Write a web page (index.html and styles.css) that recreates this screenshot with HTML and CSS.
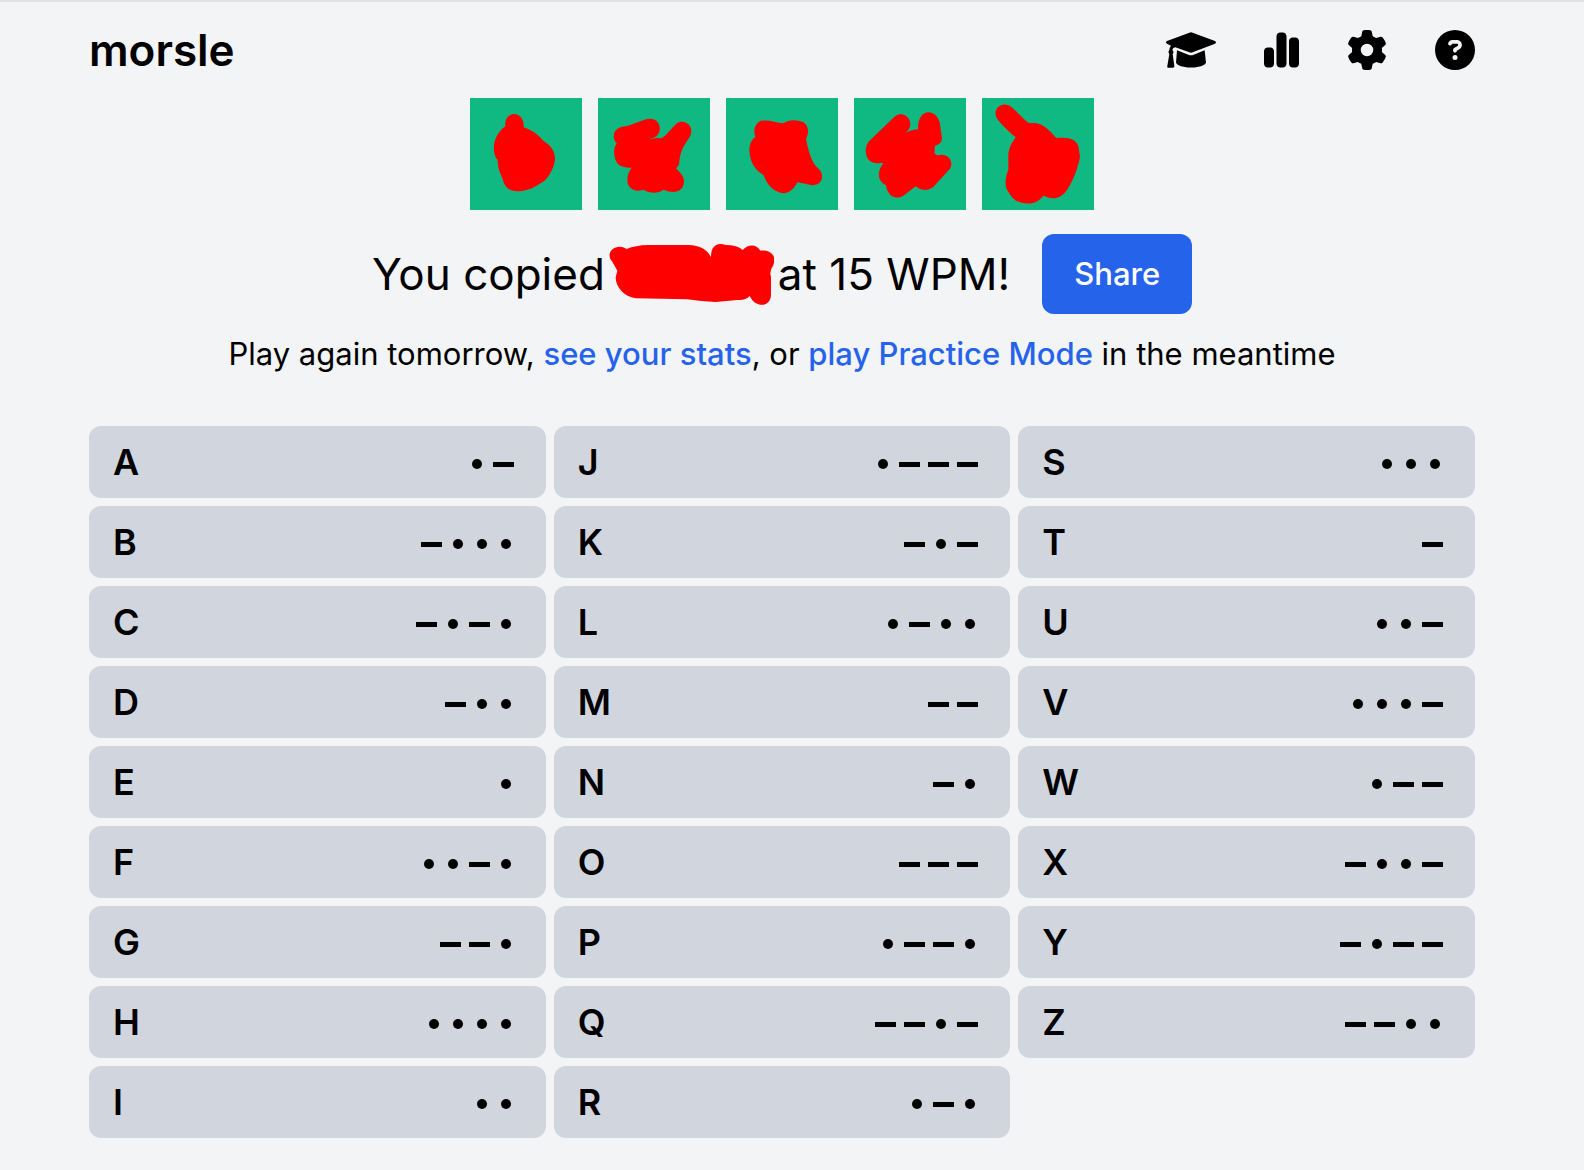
FILE: index.html
```html
<!DOCTYPE html>
<html lang="en">
<head>
    <meta charset="UTF-8">
    <meta name="viewport" content="width=device-width, initial-scale=1">
    <title>morsle</title>
    <link rel="stylesheet" href="styles.css">
</head>
<body>
    <div class="page">
        <header class="header">
            <h1>morsle</h1>
            <nav class="menu">
                <button type="button" aria-label="Practice Mode">
                    <svg class="icon" viewBox="48 60 150 120">
                        <path d="M118 68Q123 66 128 68L195 93Q201 97 195 101L128 127Q123 129 118 127L76 112Q68 113 67 120Q73 126 68 132L73 168Q74 173 69 173H55Q50 173 52 168L58 132Q53 126 58 120Q58 113 63 107L51 101Q45 97 51 93Z"/>
                        <path d="M81 121L115 134Q123 137 131 134L164 121L168 158Q163 167 145 170Q123 175 101 170Q83 167 78 158Z"/>
                    </svg>
                </button>
                <button type="button" aria-label="Stats">
                    <svg class="icon" viewBox="0 0 448 512"><path d="M160 80c0-26.500 21.500-48 48-48h32c26.500 0 48 21.500 48 48V432c0 26.500-21.500 48-48 48H208c-26.500 0-48-21.500-48-48V80zM0 272c0-26.500 21.500-48 48-48H80c26.500 0 48 21.500 48 48V432c0 26.500-21.500 48-48 48H48c-26.500 0-48-21.500-48-48V272zM368 96h32c26.500 0 48 21.500 48 48V432c0 26.500-21.500 48-48 48H368c-26.500 0-48-21.500-48-48V144c0-26.500 21.500-48 48-48z"/></svg>
                </button>
                <button type="button" aria-label="Settings">
                    <svg class="icon" viewBox="0 0 512 512"><path d="M495.900 166.600c3.200 8.700 .5 18.400-6.400 24.600l-43.300 39.400c1.100 8.300 1.700 16.800 1.700 25.400s-.6 17.100-1.700 25.400l43.300 39.400c6.900 6.200 9.600 15.900 6.400 24.600c-4.400 11.900-9.700 23.300-15.800 34.300l-4.700 8.100c-6.600 11-14 21.400-22.100 31.200c-5.900 7.200-15.700 9.600-24.500 6.800l-55.700-17.700c-13.400 10.300-28.200 18.900-44 25.400l-12.500 57.100c-2 9.100-9 16.300-18.200 17.800c-13.800 2.300-28 3.500-42.500 3.500s-28.700-1.200-42.500-3.500c-9.200-1.500-16.200-8.700-18.200-17.800l-12.500-57.100c-15.800-6.500-30.600-15.100-44-25.400L83.100 425.900c-8.800 2.800-18.600 .3-24.500-6.800c-8.100-9.800-15.500-20.200-22.100-31.200l-4.700-8.100c-6.100-11-11.400-22.400-15.800-34.300c-3.200-8.700-.5-18.400 6.400-24.600l43.300-39.400C64.600 273.100 64 264.600 64 256s.6-17.100 1.700-25.400L22.400 191.200c-6.900-6.200-9.600-15.900-6.400-24.600c4.400-11.900 9.700-23.300 15.800-34.300l4.700-8.100c6.600-11 14-21.400 22.100-31.200c5.900-7.200 15.700-9.600 24.500-6.800l55.700 17.700c13.400-10.300 28.200-18.900 44-25.400l12.500-57.100c2-9.100 9-16.300 18.200-17.800C227.300 1.200 241.500 0 256 0s28.700 1.200 42.500 3.500c9.200 1.500 16.200 8.700 18.200 17.800l12.500 57.100c15.800 6.500 30.600 15.100 44 25.400l55.700-17.700c8.800-2.800 18.600-.3 24.500 6.800c8.100 9.800 15.500 20.200 22.100 31.200l4.700 8.100c6.100 11 11.400 22.400 15.800 34.300zM256 336a80 80 0 1 0 0-160 80 80 0 1 0 0 160z"/></svg>
                </button>
                <button type="button" aria-label="Help">
                    <svg class="icon" viewBox="0 0 512 512"><path d="M256 512A256 256 0 1 0 256 0a256 256 0 1 0 0 512zM169.800 165.300c7.900-22.300 29.100-37.300 52.800-37.300h58.300c34.900 0 63.100 28.300 63.100 63.100c0 22.600-12.100 43.500-31.700 54.800L280 264.400c-.2 13-10.900 23.600-24 23.600c-13.300 0-24-10.700-24-24V250.500c0-8.600 4.600-16.500 12.100-20.800l44.300-25.400c4.700-2.700 7.600-7.700 7.600-13.100c0-8.400-6.800-15.100-15.100-15.100H222.600c-3.400 0-6.400 2.100-7.500 5.300l-.4 1.200c-4.400 12.500-18.200 19-30.600 14.600s-19-18.200-14.600-30.600l.4-1.200zM224 352a32 32 0 1 1 64 0 32 32 0 1 1 -64 0z"/></svg>
                </button>
            </nav>
        </header>

        <main>
            <!-- Today's answer, hidden under scribbles -->
            <div class="tiles">
                <svg class="tile" viewBox="0 0 336 336"><path d="M106 85C100 35 165 35 161 88C195 100 208 115 222 130C245 145 255 160 255 185C250 215 235 240 218 252C195 265 190 273 155 279C120 283 105 272 97 240C90 225 84 215 83 187C65 165 65 115 106 85Z"/></svg>
                <svg class="tile" viewBox="0 0 336 336"><path d="M72 86C100 85 125 65 155 62C190 62 195 105 170 118L150 125Q170 118 190 121C210 108 220 90 235 77C260 60 290 85 277 113C265 135 248 150 244 190Q245 202 234 211C250 228 258 235 258 252C255 285 225 287 197 275C180 288 155 286 136 275C110 285 88 270 88 247C88 230 93 220 101 209C65 210 50 200 48 160Q48 148 56 136C40 120 46 90 72 86Z"/></svg>
                <svg class="tile" viewBox="0 0 336 336"><path d="M105 68C130 65 152 74 172 76C190 62 215 66 232 72C248 82 250 105 240 122C245 150 255 190 272 207C300 228 290 262 258 262C245 260 230 255 214 253C205 272 190 285 173 286C145 283 125 265 113 232C90 215 72 200 70 155Q70 130 88 116C80 95 88 75 105 68Z"/></svg>
                <svg class="tile" viewBox="0 0 336 336"><path d="M45 130L123 55C145 37 175 60 168 86C164 98 155 104 145 112Q165 95 192 94C190 30 245 30 257 73L264 120Q264 138 243 143L241 165Q247 174 257 171C285 165 300 195 288 212L238 267C220 280 200 278 185 265L148 293C125 307 100 295 96 262C70 250 68 220 88 195C60 197 35 195 35 155Q36 140 45 130Z"/></svg>
                <svg class="tile" viewBox="0 0 336 336"><path d="M48 66C25 36 60 5 88 27C110 45 125 65 142 76C180 70 200 95 223 120C260 118 292 120 292 165C298 180 287 200 284 216C265 265 250 295 220 301Q200 301 184 293C170 312 150 320 123 315C95 312 85 290 75 275C65 255 75 225 79 215V168C82 145 90 135 101 118Q75 98 48 66Z"/></svg>
            </div>

            <div class="result">
                <p>
                    <span>You copied</span>
                    <svg class="scribble" viewBox="0 0 495 183"><path d="M9 52C-14 25 22-5 53 15Q80 4 115 3H235C275 2 297 20 306 40C305 5 325-6 350 3Q385 3 401 18C420-3 445 2 454 20C485 17 505 35 492 65Q480 82 486 98V155C482 190 440 193 422 156Q410 170 385 168L320 174Q275 173 235 166L80 163C45 158 20 130 20 100L25 80Z"/></svg>
                    <span>at 15 WPM!</span>
                </p>
                <button type="button" class="share-button">Share</button>
            </div>

            <p class="next">Play again tomorrow, <a href="#stats">see your stats</a>, or <a href="#practice">play Practice Mode</a> in the meantime</p>

            <ul class="alphabet" id="alphabet"></ul>
        </main>
    </div>

    <script>
        const morse = {
            A: '.-', B: '-...', C: '-.-.', D: '-..', E: '.', F: '..-.', G: '--.', H: '....', I: '..',
            J: '.---', K: '-.-', L: '.-..', M: '--', N: '-.', O: '---', P: '.--.', Q: '--.-', R: '.-.',
            S: '...', T: '-', U: '..-', V: '...-', W: '.--', X: '-..-', Y: '-.--', Z: '--..'
        };

        const alphabetElement = document.getElementById('alphabet');

        // One card for each letter
        Object.entries(morse).forEach(([letter, code]) => {
            const marks = [...code].map(c => `<i class="${c === '.' ? 'dot' : 'dash'}"></i>`).join('');
            const card = document.createElement('li');
            card.innerHTML = `
                <span>${letter}</span>
                <span class="code" role="img" aria-label="${code}">${marks}</span>
            `;
            alphabetElement.appendChild(card);
        });
    </script>
</body>
</html>
```
FILE: styles.css
```css
* {
    box-sizing: border-box;
}

body {
    margin: 0;
    border-top: 2px solid #e2e2e3;
    background-color: #f3f4f6;
    color: #000;
    font-family: Inter, sans-serif;
    font-size: 31px;
    line-height: 48px;
}

h1, p, ul {
    margin: 0;
    padding: 0;
}

button {
    border: none;
    font: inherit;
    cursor: pointer;
}

.page {
    padding: 0 109px 40px 89px;
}

.header {
    display: flex;
    align-items: center;
    justify-content: space-between;
    height: 96px;
}

.header h1 {
    font-size: 44px;
    font-weight: 600;
}

.menu {
    display: flex;
    gap: 48px;
}

.menu button {
    padding: 0;
    background: none;
}

.icon {
    display: block;
    height: 40px;
}

.tiles {
    display: flex;
    justify-content: center;
    gap: 16px;
}

.tile {
    width: 112px;
    height: 112px;
    background-color: #10b981;
    fill: #f00;
}

.result {
    display: flex;
    align-items: center;
    justify-content: center;
    gap: 32px;
    margin-top: 24px;
}

.result p {
    display: flex;
    align-items: center;
    gap: 4px;
    font-size: 44px;
}

.scribble {
    width: 165px;
    height: 61px;
    fill: #f00;
}

.share-button {
    padding: 16px 32px;
    border-radius: 12px;
    background-color: #2563eb;
    color: #fff;
    font-weight: 500;
}

.next {
    margin-top: 16px;
    text-align: center;
}

.next a {
    color: #2563eb;
    font-weight: 500;
    text-decoration: none;
}

/* Letters run down the columns */
.alphabet {
    display: grid;
    grid-template-rows: repeat(9, auto);
    grid-auto-columns: 1fr;
    grid-auto-flow: column;
    gap: 8px;
    margin-top: 48px;
    list-style: none;
    font-size: 36px;
    font-weight: 600;
}

.alphabet li {
    display: flex;
    align-items: center;
    justify-content: space-between;
    padding: 12px 28px 12px 24px;
    border-radius: 12px;
    background-color: #d1d5dd;
}

.code {
    display: flex;
    align-items: center;
    padding-top: 4px;
}

.dot {
    width: 10px;
    height: 10px;
    margin: 0 7px;
    border-radius: 50%;
    background-color: #000;
}

.dash {
    width: 21px;
    height: 5px;
    margin: 0 4px;
    background-color: #000;
}
```
